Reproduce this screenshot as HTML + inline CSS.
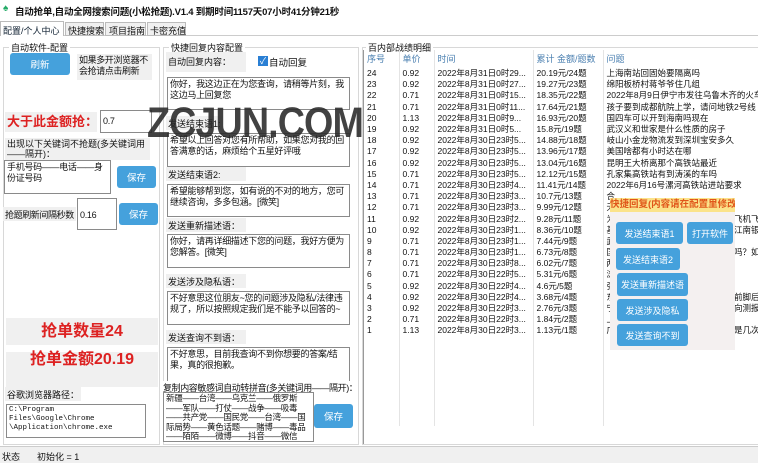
<!DOCTYPE html>
<html><head><meta charset="utf-8"><style>
*{margin:0;padding:0;box-sizing:border-box}
body{width:758px;height:463px;overflow:hidden;background:#fff;font-family:"Liberation Sans","Noto Sans CJK SC",sans-serif;font-size:9px;color:#111;position:relative}
.a{position:absolute;white-space:nowrap}
.tb{border:1px solid #8a8a8a;background:#fff;font-size:9px;line-height:11px;padding:1px 2px;white-space:normal;overflow:hidden;letter-spacing:-0.3px}
.btn{position:absolute;background:#45a1dc;color:#fff;border-radius:3px;text-align:center;font-size:9.5px;display:flex;align-items:center;justify-content:center;white-space:nowrap}
.grp{position:absolute;border:1px solid #d8d8d8}
.gl{position:absolute;background:#fff;padding:0 2px;top:-7px;font-size:9px;white-space:nowrap}
.lbl{position:absolute;background:#f0f0f0;padding:1px 2px;font-size:9px;white-space:nowrap}
table{border-collapse:collapse;table-layout:fixed}
td{height:11.2px;font-size:8.5px;line-height:11px;padding:0 3px;border-right:1px solid #e4e4e4;white-space:nowrap;overflow:hidden}
</style></head><body>
<div class="a" style="left:3px;top:3px;font-size:10px;color:#2a6">♠</div>
<div class="a" style="left:15px;top:4px;font-size:9.5px;font-weight:bold;letter-spacing:-0.2px">自动抢单,自动全网搜索问题(小松抢题).V1.4 到期时间1157天07小时41分钟21秒</div>
<div style="position:absolute;left:0;top:35px;width:758px;height:1px;background:#ccc"></div>
<div class="a" style="left:0;top:21px;width:64px;height:15px;background:#fff;border:1px solid #bbb;border-bottom:none;padding:2px 2px;font-size:9px;color:#123">配置/个人中心</div>
<div class="a" style="left:65px;top:22px;width:39px;height:14px;background:#f0f0f0;border:1px solid #bbb;padding:1px 2px;font-size:9px">快捷搜索</div>
<div class="a" style="left:105px;top:22px;width:41px;height:14px;background:#f0f0f0;border:1px solid #bbb;padding:1px 3px;font-size:9px">项目指南</div>
<div class="a" style="left:147px;top:22px;width:39px;height:14px;background:#f0f0f0;border:1px solid #bbb;padding:1px 2px;font-size:9px">卡密充值</div>

<div class="grp" style="left:3px;top:47px;width:157px;height:398px"><span class="gl" style="left:5px">自动软件-配置</span></div>
<div class="btn" style="left:10px;top:53px;width:60px;height:22px">刷新</div>
<div class="lbl" style="left:77px;top:54px;width:75px;height:26px;white-space:normal;line-height:11px;font-size:9px;letter-spacing:-0.4px">如果多开浏览器不会抢请点击刷新</div>
<div class="lbl" style="left:5px;top:112px;height:20px;width:92px;color:#d22;font-weight:bold;font-size:13px;line-height:17px">大于此金额抢：</div>
<div class="tb a" style="left:100px;top:110px;width:52px;height:23px;padding-top:5px">0.7</div>
<div class="lbl" style="left:5px;top:138px;width:145px;height:22px;white-space:normal;line-height:10px">出现以下关键词不抢题(多关键词用——隔开)：</div>
<div class="tb a" style="left:4px;top:160px;width:107px;height:34px">手机号码——电话——身份证号码</div>
<div class="btn" style="left:117px;top:166px;width:39px;height:22px">保存</div>
<div class="lbl" style="left:3px;top:207px;height:14px;letter-spacing:-0.4px">抢题刷新间隔秒数</div>
<div class="tb a" style="left:77px;top:198px;width:40px;height:32px;padding-top:11px">0.16</div>
<div class="btn" style="left:119px;top:203px;width:39px;height:22px">保存</div>
<div class="lbl" style="left:6px;top:318px;width:152px;height:27px;text-align:center;color:#d22;font-weight:bold;font-size:16px;line-height:26px">抢单数量24</div>
<div class="lbl" style="left:6px;top:352px;width:152px;height:35px;text-align:center;color:#d22;font-weight:bold;font-size:16px;line-height:14px">抢单金额20.19</div>
<div class="lbl" style="left:5px;top:387px;height:14px">谷歌浏览器路径：</div>
<div class="tb a" style="left:6px;top:404px;width:140px;height:34px;font-family:'Liberation Mono',monospace;font-size:7.5px;line-height:9px;letter-spacing:0">C:\Program Files\Google\Chrome \Application\chrome.exe</div>

<div class="grp" style="left:163px;top:47px;width:196px;height:398px"><span class="gl" style="left:5px">快捷回复内容配置</span></div>
<div class="lbl" style="left:166px;top:52px;height:20px;width:80px;line-height:18px">自动回复内容：</div>
<div class="a" style="left:258px;top:56px;width:10px;height:10px;background:#2a7fd4;color:#fff;font-size:9px;line-height:10px;text-align:center">✓</div>
<div class="a" style="left:269px;top:55px;font-size:9.5px">自动回复</div>
<div class="tb a" style="left:167px;top:77px;width:183px;height:33px">你好，我这边正在为您查询，请稍等片刻，我这边马上回复您</div>
<div class="lbl" style="left:166px;top:116px;height:14px">发送结束语1:</div>
<div class="tb a" style="left:167px;top:133px;width:183px;height:34px">希望以上回答对您有所帮助，如果您对我的回答满意的话，麻烦给个五星好评哦</div>
<div class="lbl" style="left:166px;top:167px;height:14px;width:80px">发送结束语2:</div>
<div class="tb a" style="left:167px;top:184px;width:183px;height:33px">希望能够帮到您，如有说的不对的地方，您可继续咨询，多多包涵。[微笑]</div>
<div class="lbl" style="left:166px;top:218px;height:14px;width:80px">发送重新描述语：</div>
<div class="tb a" style="left:167px;top:234px;width:183px;height:34px">你好，请再详细描述下您的问题，我好方便为您解答。[微笑]</div>
<div class="lbl" style="left:166px;top:274px;height:14px;width:80px">发送涉及隐私语：</div>
<div class="tb a" style="left:167px;top:291px;width:183px;height:34px">不好意思这位朋友~您的问题涉及隐私/法律违规了，所以按照规定我们是不能予以回答的~</div>
<div class="lbl" style="left:166px;top:330px;height:14px;width:80px">发送查询不到语：</div>
<div class="tb a" style="left:167px;top:347px;width:183px;height:35px">不好意思，目前我查询不到你想要的答案/结果，真的很抱歉。</div>
<div class="a" style="left:163px;top:381px;font-size:9px;background:#fff;letter-spacing:-0.4px">复制内容敏感词自动转拼音(多关键词用——隔开)：</div>
<div class="tb a" style="left:163px;top:392px;width:151px;height:50px;font-size:8.5px;line-height:9.5px">新疆——台湾——乌克兰——俄罗斯——军队——打仗——战争——吸毒——共产党——国民党——台湾——国际局势——黄色话题——赌博——毒品——陌陌——微博——抖音——微信</div>
<div class="btn" style="left:314px;top:404px;width:39px;height:24px">保存</div>

<div class="grp" style="left:362px;top:47px;width:400px;height:398px"><span class="gl" style="left:3px">百内部战绩明细</span></div>
<div class="a" style="left:363px;top:50px;width:395px;height:394px;border-left:1px solid #999;overflow:hidden">
<table style="width:420px">
<colgroup><col style="width:35px"><col style="width:35px"><col style="width:99px"><col style="width:70px"><col></colgroup>
<tr style="color:#4a7fb0"><td style="height:18px;font-size:9px">序号</td><td style="font-size:9px">单价</td><td style="font-size:9px">时间</td><td style="font-size:9px">累计 金额/题数</td><td style="font-size:9px;border:none">问题</td></tr>
<tr><td>24</td><td>0.92</td><td>2022年8月31日0时29...</td><td>20.19元/24题</td><td>上海南站回固始要隔离吗</td></tr>
<tr><td>23</td><td>0.92</td><td>2022年8月31日0时27...</td><td>19.27元/23题</td><td>绵阳板桥村蒋爷爷住几组</td></tr>
<tr><td>22</td><td>0.71</td><td>2022年8月31日0时15...</td><td>18.35元/22题</td><td>2022年8月9日伊宁市发往乌鲁木齐的火车</td></tr>
<tr><td>21</td><td>0.71</td><td>2022年8月31日0时11...</td><td>17.64元/21题</td><td>孩子要到成都航院上学，请问地铁2号线</td></tr>
<tr><td>20</td><td>1.13</td><td>2022年8月31日0时9...</td><td>16.93元/20题</td><td>国四车可以开到海南吗现在</td></tr>
<tr><td>19</td><td>0.92</td><td>2022年8月31日0时5...</td><td>15.8元/19题</td><td>武汉义和世家是什么性质的房子</td></tr>
<tr><td>18</td><td>0.92</td><td>2022年8月30日23时5...</td><td>14.88元/18题</td><td>岐山小金龙物流发到深圳宝安多久</td></tr>
<tr><td>17</td><td>0.92</td><td>2022年8月30日23时5...</td><td>13.96元/17题</td><td>美国啥都有小时达在哪</td></tr>
<tr><td>16</td><td>0.92</td><td>2022年8月30日23时5...</td><td>13.04元/16题</td><td>昆明王大桥离那个高铁站最近</td></tr>
<tr><td>15</td><td>0.71</td><td>2022年8月30日23时5...</td><td>12.12元/15题</td><td>孔家集高铁站有到涛溪的车吗</td></tr>
<tr><td>14</td><td>0.71</td><td>2022年8月30日23时4...</td><td>11.41元/14题</td><td>2022年6月16号漯河高铁站进站要求</td></tr>
<tr><td>13</td><td>0.71</td><td>2022年8月30日23时3...</td><td>10.7元/13题</td><td>合</td></tr>
<tr><td>12</td><td>0.71</td><td>2022年8月30日23时3...</td><td>9.99元/12题</td><td>无</td></tr>
<tr><td>11</td><td>0.92</td><td>2022年8月30日23时2...</td><td>9.28元/11题</td><td>为　　　　　　　　　　　　　　飞机飞</td></tr>
<tr><td>10</td><td>0.92</td><td>2022年8月30日23时1...</td><td>8.36元/10题</td><td>基　　　　　　　　　　　　　　江南银</td></tr>
<tr><td>9</td><td>0.71</td><td>2022年8月30日23时1...</td><td>7.44元/9题</td><td>武</td></tr>
<tr><td>8</td><td>0.71</td><td>2022年8月30日23时1...</td><td>6.73元/8题</td><td>国　　　　　　　　　　　　　　吗？如</td></tr>
<tr><td>7</td><td>0.71</td><td>2022年8月30日23时8...</td><td>6.02元/7题</td><td>两</td></tr>
<tr><td>6</td><td>0.71</td><td>2022年8月30日22时5...</td><td>5.31元/6题</td><td>浏</td></tr>
<tr><td>5</td><td>0.92</td><td>2022年8月30日22时4...</td><td>4.6元/5题</td><td>张</td></tr>
<tr><td>4</td><td>0.92</td><td>2022年8月30日22时4...</td><td>3.68元/4题</td><td>东　　　　　　　　　　　　　　前脚后</td></tr>
<tr><td>3</td><td>0.92</td><td>2022年8月30日22时3...</td><td>2.76元/3题</td><td>宁　　　　　　　　　　　　　　向测报</td></tr>
<tr><td>2</td><td>0.71</td><td>2022年8月30日22时3...</td><td>1.84元/2题</td><td>上</td></tr>
<tr><td>1</td><td>1.13</td><td>2022年8月30日22时3...</td><td>1.13元/1题</td><td>广　　　　　　　　　　　　　　是几次</td></tr>
<tr><td></td><td></td><td></td><td></td><td></td></tr>
<tr><td></td><td></td><td></td><td></td><td></td></tr>
<tr><td></td><td></td><td></td><td></td><td></td></tr>
<tr><td></td><td></td><td></td><td></td><td></td></tr>
<tr><td></td><td></td><td></td><td></td><td></td></tr>
<tr><td></td><td></td><td></td><td></td><td></td></tr>
<tr><td></td><td></td><td></td><td></td><td></td></tr>
<tr><td></td><td></td><td></td><td></td><td></td></tr>
</table>
</div>

<div class="a" style="left:610px;top:198px;width:125px;height:14px;background:#fbe38a;color:#e0561a;font-weight:bold;font-size:9.5px;line-height:14px;overflow:hidden">快捷回复(内容请在配置里修改</div>
<div class="a" style="left:610px;top:212px;width:125px;height:138px;background:#f4f0f0"></div>
<div class="btn" style="left:616px;top:222px;width:67px;height:22px;font-size:9px">发送结束语1</div>
<div class="btn" style="left:687px;top:222px;width:46px;height:22px;font-size:9px">打开软件</div>
<div class="btn" style="left:616px;top:248px;width:64px;height:22px;font-size:9px">发送结束语2</div>
<div class="btn" style="left:617px;top:273px;width:71px;height:23px;font-size:9px">发送重新描述语</div>
<div class="btn" style="left:617px;top:299px;width:71px;height:22px;font-size:9px">发送涉及隐私</div>
<div class="btn" style="left:617px;top:324px;width:71px;height:22px;font-size:9px">发送查询不到</div>

<div class="a" style="left:147px;top:98px;font-size:41px;font-weight:bold;color:rgba(40,40,40,0.88);transform:scale(0.92,1.05);transform-origin:left top;letter-spacing:-1px">ZCJUN.COM</div>

<div style="position:absolute;left:0;top:446px;width:758px;height:1px;background:#ccc"></div>
<div class="a" style="left:0;top:447px;width:758px;height:16px;background:#f0f0f0"></div>
<div class="a" style="left:2px;top:450px;font-size:9px">状态</div>
<div class="a" style="left:37px;top:450px;font-size:9px">初始化 = 1</div>
</body></html>
